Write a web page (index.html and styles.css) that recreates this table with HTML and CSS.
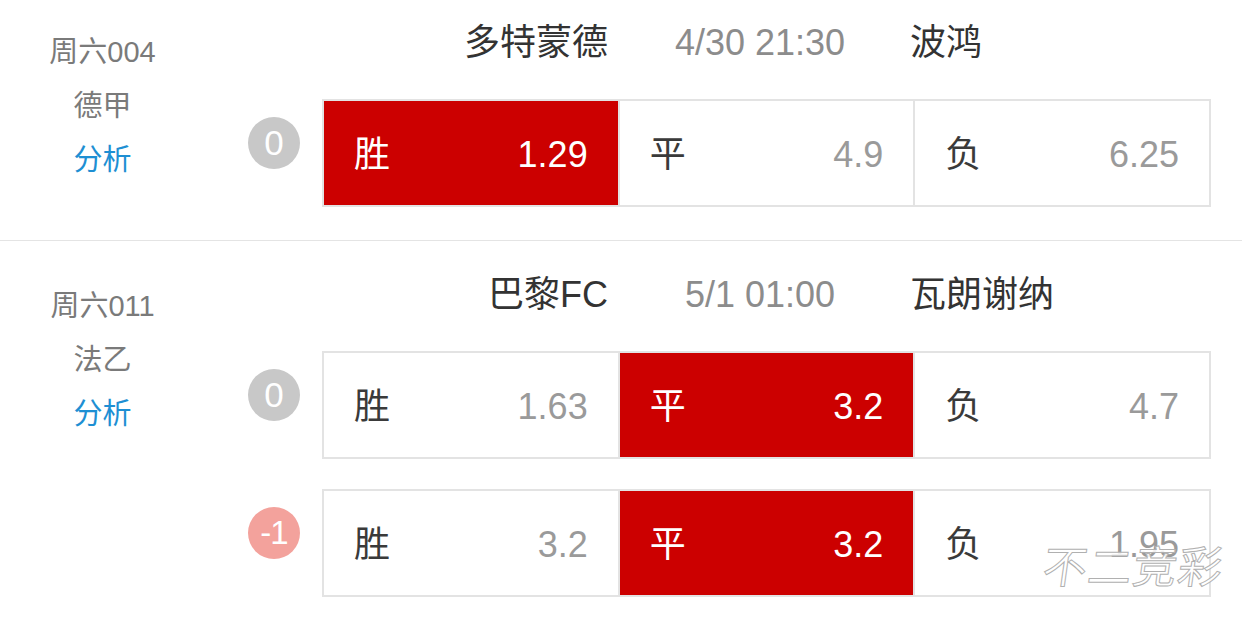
FILE: index.html
```html
<!DOCTYPE html>
<html lang="zh-CN">
<head>
<meta charset="utf-8">
<title>竞彩</title>
<link rel="stylesheet" href="styles.css">
</head>
<body>
<div class="page">
  <div class="list">
    <section class="match">
      <div class="info">
        <div class="no">周六004</div>
        <div class="league">德甲</div>
        <a class="ana">分析</a>
      </div>
      <div class="main">
        <div class="teams">
          <span class="home">多特蒙德</span>
          <span class="time">4/30 21:30</span>
          <span class="away">波鸿</span>
        </div>
        <div class="line">
          <span class="badge">0</span>
          <div class="odds">
            <div class="cell on"><span class="lbl">胜</span><span class="val">1.29</span></div>
            <div class="cell"><span class="lbl">平</span><span class="val">4.9</span></div>
            <div class="cell"><span class="lbl">负</span><span class="val">6.25</span></div>
          </div>
        </div>
      </div>
    </section>
    <section class="match">
      <div class="info">
        <div class="no">周六011</div>
        <div class="league">法乙</div>
        <a class="ana">分析</a>
      </div>
      <div class="main">
        <div class="teams">
          <span class="home">巴黎FC</span>
          <span class="time">5/1 01:00</span>
          <span class="away">瓦朗谢纳</span>
        </div>
        <div class="line">
          <span class="badge">0</span>
          <div class="odds">
            <div class="cell"><span class="lbl">胜</span><span class="val">1.63</span></div>
            <div class="cell on"><span class="lbl">平</span><span class="val">3.2</span></div>
            <div class="cell"><span class="lbl">负</span><span class="val">4.7</span></div>
          </div>
        </div>
        <div class="line">
          <span class="badge neg">-1</span>
          <div class="odds">
            <div class="cell"><span class="lbl">胜</span><span class="val">3.2</span></div>
            <div class="cell on"><span class="lbl">平</span><span class="val">3.2</span></div>
            <div class="cell"><span class="lbl">负</span><span class="val">1.95</span></div>
          </div>
        </div>
      </div>
    </section>
  </div>
  <div class="watermark">不二竞彩</div>
</div>
</body>
</html>
```

FILE: styles.css
```css
* { box-sizing: border-box; }
html, body {
  margin: 0;
  padding: 0;
  background: #ffffff;
}
body {
  font-family: "Liberation Sans", "Noto Sans CJK SC", sans-serif;
  color: #333333;
  overflow: hidden;
}
.page {
  position: relative;
  width: 1242px;
  height: 619px;
  overflow: hidden;
}
.list {
  margin-top: -13px;
}
.match {
  display: flex;
  padding: 31px 0 33px 0;
  border-bottom: 1px solid #e4e4e4;
}
.match + .match {
  padding-top: 29px;
}
.info {
  width: 205px;
  flex: none;
  padding-top: 7px;
  display: flex;
  flex-direction: column;
  align-items: center;
  font-size: 29px;
  line-height: 54px;
  color: #7a7a7a;
}
.match + .match .info {
  padding-top: 9px;
}
.ana {
  color: #1e8fd3;
  text-decoration: none;
}
.main {
  flex: 1;
  padding-right: 31px;
  display: flex;
  flex-direction: column;
  gap: 30px;
}
.teams {
  margin-left: 117px;
  display: grid;
  grid-template-columns: 296px 292px 1fr;
  font-size: 36px;
  line-height: 50px;
  height: 50px;
  margin-bottom: 1px;
  white-space: nowrap;
}
.home {
  text-align: right;
  padding-right: 10px;
  color: #333333;
}
.time {
  text-align: center;
  padding-right: 8px;
  color: #8c8c8c;
}
.away {
  color: #333333;
}
.line {
  display: flex;
  align-items: center;
}
.badge {
  flex: none;
  width: 52px;
  height: 52px;
  margin-left: 43px;
  margin-right: 22px;
  margin-bottom: 20px;
  border-radius: 50%;
  background: #c8c8c8;
  color: #ffffff;
  font-size: 35px;
  display: flex;
  align-items: center;
  justify-content: center;
}
.badge.neg {
  background: #f3a29c;
  font-size: 33px;
  letter-spacing: -1px;
}
.odds {
  flex: 1;
  height: 108px;
  display: flex;
  border: 2px solid #e3e3e3;
}
.cell {
  flex: 1;
  display: flex;
  align-items: baseline;
  justify-content: space-between;
  padding: 3px 30px 0 30px;
  font-size: 36px;
  line-height: 101px;
  background: #ffffff;
}
.cell + .cell {
  border-left: 2px solid #e3e3e3;
}
.lbl {
  color: #3a3a3a;
}
.val {
  color: #9a9a9a;
}
.cell.on {
  background: #cc0000;
}
.cell.on .lbl,
.cell.on .val {
  color: #ffffff;
}
.watermark {
  position: absolute;
  left: 1043px;
  top: 543px;
  font-size: 44px;
  line-height: 50px;
  color: rgba(255, 255, 255, 0.85);
  -webkit-text-stroke: 1px #b0b0b0;
  letter-spacing: 1px;
  transform: skewX(-8deg);
  white-space: nowrap;
}
```
